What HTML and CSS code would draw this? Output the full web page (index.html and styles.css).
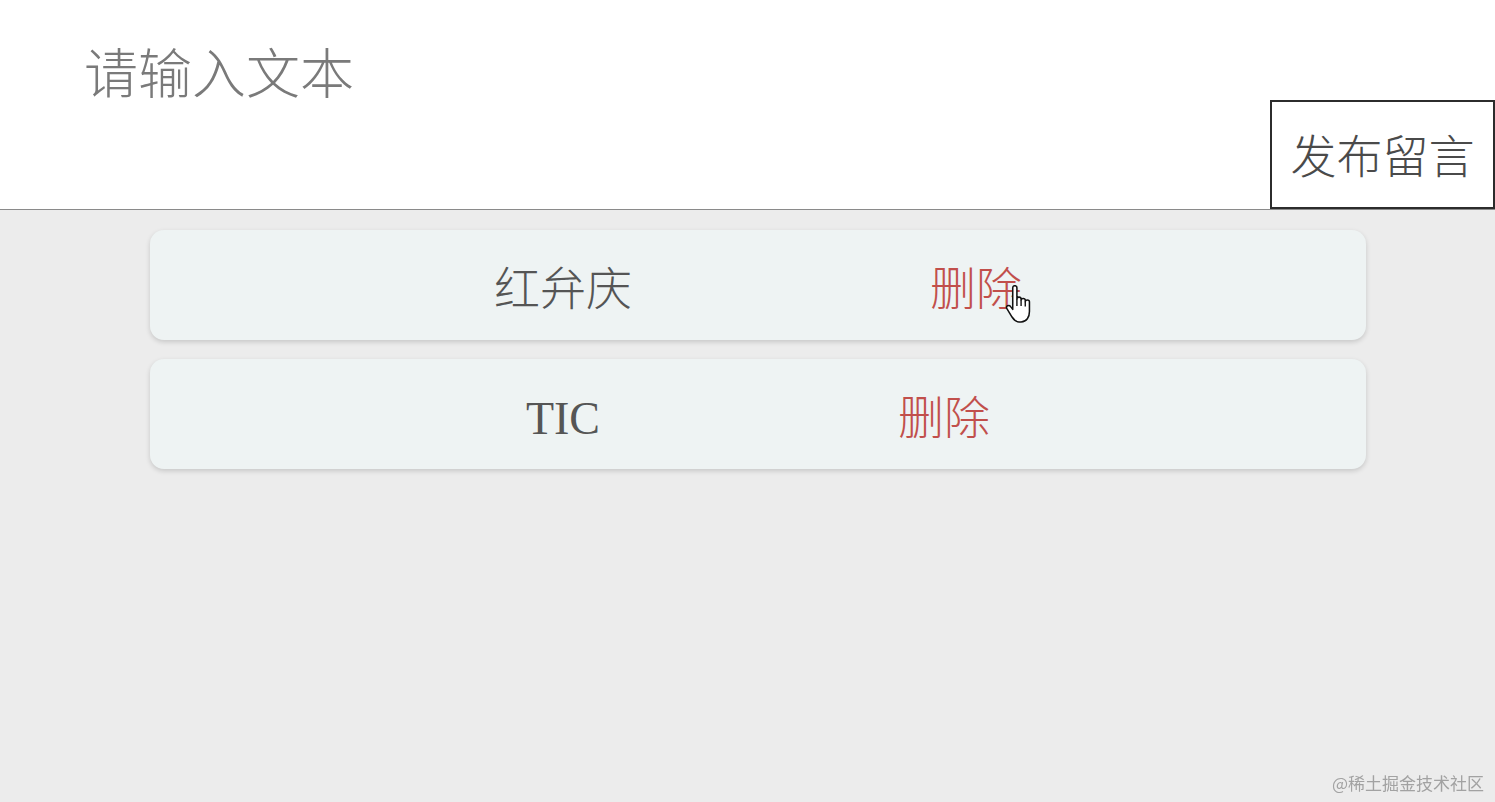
FILE: index.html
```html
<!DOCTYPE html>
<html lang="zh-CN">
<head>
    <meta charset="UTF-8">
    <meta name="viewport" content="width=device-width, initial-scale=1.0">
    <title>留言板</title>
    <link rel="stylesheet" href="styles.css">
</head>
<body>
    <div class="board__header">
        <textarea class="board__input" placeholder="请输入文本"></textarea>
        <button class="board__submit">发布留言</button>
    </div>
    <div class="board__list">
        <div class="board__item"><span class="board__name">红弁庆</span><span class="board__delete">删除<svg class="cursor" width="28" height="39" viewBox="0 0 20 28">
                    <path d="M5.5 2C5.5 1 6.3 .5 7 .5S8.5 1 8.5 2V10C8.5 9.2 9.2 8.7 10 8.7S11.5 9.2 11.5 10V11C11.5 10.2 12.2 9.7 13 9.7S14.5 10.2 14.5 11V12C14.5 11.2 15.2 10.7 16 10.7S17.5 11.2 17.5 12V19C17.5 23 15.5 26.5 11.5 26.5H10C7.5 26.5 6.3 25 5 23L1.3 17C.8 16.2 1 15.3 1.8 14.9S3.5 14.8 4 15.5L5.5 17.5Z" fill="#fff" stroke="#111" stroke-width="1.1" stroke-linejoin="round"/>
                    <path d="M8.5 10V15M11.5 11V15M14.5 12V15.5" stroke="#111" stroke-width="1"/>
                </svg></span></div>
        <div class="board__item"><span class="board__name">TIC</span><span class="board__delete">删除</span></div>
    </div>
    <div class="watermark">@稀土掘金技术社区</div>
</body>
</html>
```

FILE: styles.css
```css
*{
    margin: 0;
    padding: 0;
    box-sizing: border-box;
}
body {
    background: #ececec;
    font-family: "Noto Sans CJK SC", sans-serif;
    height: 802px;
    overflow: hidden;
}

.board__header {
    display: flex;
    align-items: flex-end;
    height: 210px;
    background: #fff;
    border-bottom: 1px solid #8a8a8a;
}

.board__input {
    flex: 1;
    height: 100%;
    border: none;
    outline: none;
    resize: none;
    padding: 39px 0 0 84px;
    font-family: "Noto Sans CJK SC", sans-serif;
    font-size: 54px;
    line-height: 1.2;
    font-weight: 300;
    background: transparent;
}
.board__input::placeholder {
    color: #7a7a7a;
}

.board__submit {
    width: 225px;
    height: 109px;
    border: 2px solid #2c2c2c;
    background: #fff;
    color: #4a4a4a;
    font-family: "Noto Sans CJK SC", sans-serif;
    font-size: 46px;
    font-weight: 300;
    padding: 0 0 4px;
}

.board__list {
    display: flex;
    flex-direction: column;
    gap: 19px;
    padding: 20px 129px 0 150px;
}

.board__item {
    height: 110px;
    line-height: 110px;
    text-align: center;
    white-space: nowrap;
    border-radius: 14px;
    background: #eef3f3;
    box-shadow: 0 2px 5px rgba(0, 0, 0, 0.16);
    font-size: 46px;
    font-weight: 300;
}

.board__name {
    color: #555;
    font-family: "Liberation Serif", "Noto Sans CJK SC", serif;
}

.board__delete {
    position: relative;
    margin-left: 298px;
    color: #c14f4b;
    cursor: pointer;
}

.cursor {
    position: absolute;
    left: 75px;
    top: 33px;
}

.watermark {
    position: fixed;
    right: 11px;
    bottom: 7px;
    font-size: 17px;
    color: #a2a2a2;
}
```
